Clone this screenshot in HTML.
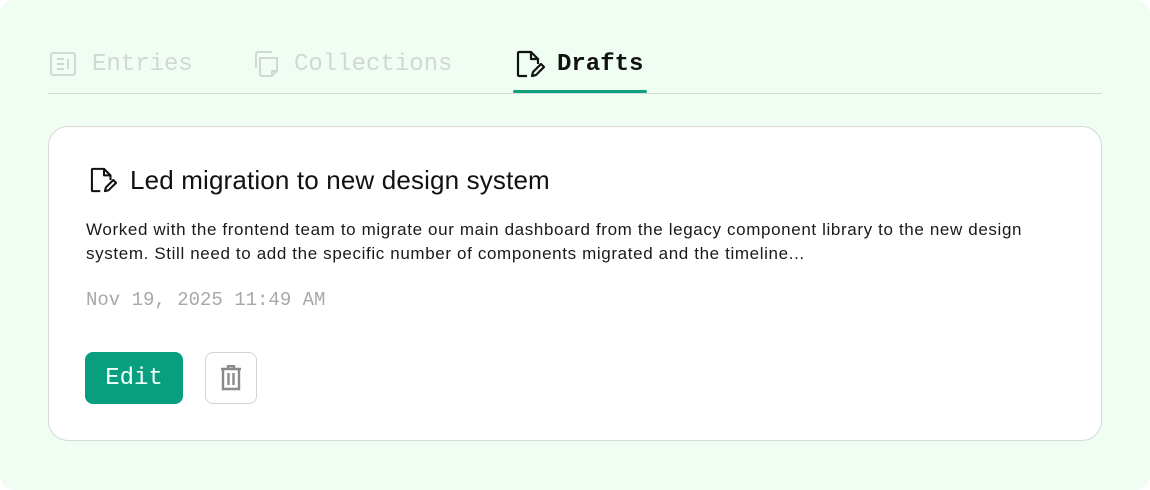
<!DOCTYPE html>
<html><head><style>
html,body{margin:0;padding:0;}
body{width:1150px;height:490px;background:#fff;position:relative;overflow:hidden;font-family:"Liberation Sans",sans-serif;}
.bg{position:absolute;left:0;top:0;width:1150px;height:490px;background:#f0fdf3;border-radius:14px;}
.tab{position:absolute;top:49px;font-family:"Liberation Mono",monospace;font-size:24px;line-height:32px;color:#d3d7d4;}
.line{position:absolute;left:48px;top:93px;width:1054px;height:1px;background:#d4dcd6;}
.bar{position:absolute;left:513px;top:90px;width:134px;height:3px;background:#0e9f7e;border-radius:2px;}
.card{position:absolute;left:48px;top:126px;width:1052px;height:313px;background:#fff;border:1px solid #d6d9d7;border-radius:20px;}
.title{position:absolute;left:130px;top:165px;font-size:26px;line-height:30px;color:#111;letter-spacing:0.15px;}
.body{position:absolute;left:86px;top:218px;width:970px;font-size:17px;line-height:24px;color:#1a1a1a;letter-spacing:0.63px;}
.date{position:absolute;left:86px;top:288px;font-family:"Liberation Mono",monospace;font-size:19px;line-height:24px;color:#a8a8a8;}
.edit{position:absolute;left:85px;top:352px;width:98px;height:52px;background:#079f7f;border-radius:8px;color:#f3fff9;font-family:"Liberation Mono",monospace;font-size:24px;line-height:54px;text-align:center;}
.trash{position:absolute;left:205px;top:352px;width:50px;height:50px;border:1px solid #d4d4d4;border-radius:8px;background:#fff;}
</style></head><body>
<div class="bg"></div>
<svg style="position:absolute;left:50px;top:52px" width="26" height="24" viewBox="0 0 26 24" fill="none" stroke="#d3d7d4" stroke-width="2"><rect x="1" y="1" width="24" height="22" rx="2"/><path d="M7 7h7M7 12h7M7 17h7M18 7v10"/></svg>
<div class="tab" style="left:92px">Entries</div>
<svg style="position:absolute;left:253px;top:50px" width="28" height="28" viewBox="0 0 28 28" fill="none" stroke="#d3d7d4" stroke-width="2"><path d="M3 18V4a2 2 0 0 1 2-2h14"/><path d="M7 8h17v13l-5 5H9a2 2 0 0 1-2-2z"/><path d="M24 21h-5v5"/></svg>
<div class="tab" style="left:294px">Collections</div>
<svg style="position:absolute;left:516px;top:50px" width="30" height="28" viewBox="0 0 30 28" fill="none" stroke="#111" stroke-width="2.2" stroke-linejoin="round"><path d="M11 26H3a1 1 0 0 1-1-1V3a1 1 0 0 1 1-1h12l7 7v5"/><path d="M15 2v7h7" /><path d="M16 26l1-4 8-8 3 3-8 8z"/></svg>
<div class="tab" style="left:557px;color:#111;font-weight:bold">Drafts</div>
<div class="line"></div><div class="bar"></div>
<div class="card"></div>
<svg style="position:absolute;left:90px;top:167px" width="28" height="26" viewBox="0 0 30 28" fill="none" stroke="#111" stroke-width="2.2" stroke-linejoin="round"><path d="M11 26H3a1 1 0 0 1-1-1V3a1 1 0 0 1 1-1h12l7 7v5"/><path d="M15 2v7h7"/><path d="M16 26l1-4 8-8 3 3-8 8z"/></svg>
<div class="title">Led migration to new design system</div>
<div class="body">Worked with the frontend team to migrate our main dashboard from the legacy component library to the new design system. Still need to add the specific number of components migrated and the timeline...</div>
<div class="date">Nov 19, 2025 11:49 AM</div>
<div class="edit">Edit</div>
<div class="trash"><svg style="position:absolute;left:14px;top:12px" width="22" height="26" viewBox="0 0 22 26" fill="none" stroke="#8a8a8a" stroke-width="2.4"><path d="M1 4h20M8 4V1h6v3"/><path d="M3 4v20h16V4"/><path d="M8.5 8v12M13.5 8v12"/></svg></div>
</body></html>
